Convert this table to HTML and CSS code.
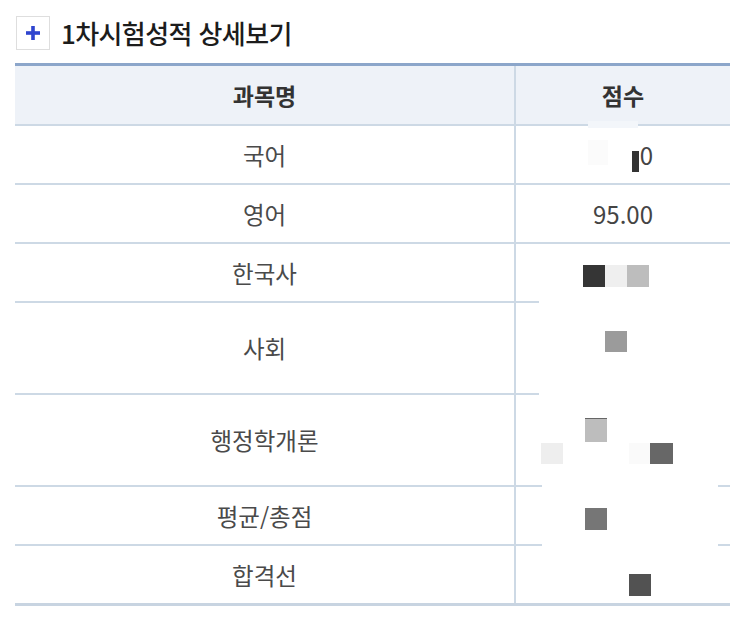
FILE: index.html
```html
<!DOCTYPE html>
<html lang="ko">
<head>
<meta charset="utf-8">
<title>1차시험성적 상세보기</title>
<link rel="stylesheet" href="styles.css">
</head>
<body>
<div class="page">
  <div class="title-bar">
    <span class="plus-box">
      <svg width="14" height="14" viewBox="0 0 14 14" aria-hidden="true">
        <rect x="0" y="5.2" width="14" height="3.6" fill="#2f45cf"/>
        <rect x="5.2" y="0" width="3.6" height="14" fill="#2f45cf"/>
      </svg>
    </span>
    <h2 class="title">1차시험성적 상세보기</h2>
  </div>

  <div class="score-table">
    <div class="row head">
      <div class="cell">과목명</div>
      <div class="cell score">점수</div>
    </div>
    <div class="row">
      <div class="cell">국어</div>
      <div class="cell score shifted"><span class="bar"></span><span class="num">0</span></div>
    </div>
    <div class="row">
      <div class="cell">영어</div>
      <div class="cell score"><span class="num">95.00</span></div>
    </div>
    <div class="row">
      <div class="cell">한국사</div>
      <div class="cell score"></div>
    </div>
    <div class="row tall">
      <div class="cell">사회</div>
      <div class="cell score"></div>
    </div>
    <div class="row tall">
      <div class="cell">행정학개론</div>
      <div class="cell score"></div>
    </div>
    <div class="row">
      <div class="cell">평균/총점</div>
      <div class="cell score"></div>
    </div>
    <div class="row last">
      <div class="cell">합격선</div>
      <div class="cell score"></div>
    </div>
  </div>

  <div class="mosaic" aria-hidden="true">
    <span class="m head-patch"></span>
    <span class="m faint-a"></span>
    <span class="m cover-a"></span>
    <span class="m cover-b"></span>
    <span class="m k1"></span>
    <span class="m k2"></span>
    <span class="m k3"></span>
    <span class="m s1"></span>
    <span class="m h1"></span>
    <span class="m h2"></span>
    <span class="m h3"></span>
    <span class="m h4"></span>
    <span class="m a1"></span>
    <span class="m p1"></span>
  </div>
</div>
</body>
</html>
```

FILE: styles.css
```css
html, body {
  margin: 0;
  padding: 0;
  background: #ffffff;
}

body {
  font-family: "Noto Sans CJK KR", "Noto Sans", sans-serif;
  color: #444444;
}

.page {
  position: relative;
  width: 743px;
  height: 627px;
  box-sizing: border-box;
  padding: 16px 13px 0 15px;
  overflow: hidden;
}

.title-bar {
  display: flex;
  align-items: center;
  height: 34px;
  margin-left: 1px;
}

.plus-box {
  width: 34px;
  height: 34px;
  box-sizing: border-box;
  border: 1px solid #dedede;
  display: flex;
  align-items: center;
  justify-content: center;
  flex: none;
}

.title {
  margin: 0 0 0 11px;
  font-size: 26px;
  font-weight: 500;
  line-height: 34px;
  color: #1c1c1c;
  letter-spacing: -0.6px;
}

.score-table {
  margin-top: 13px;
  width: 715px;
  border-top: 3px solid #8ca6ca;
}

.row {
  display: grid;
  grid-template-columns: 499px 216px;
  height: 59px;
  box-sizing: border-box;
  border-bottom: 2px solid #cdd9e5;
}

.row.head {
  height: 60px;
  background: #eef2f8;
}

.row.tall {
  height: 92px;
}

.row.last {
  height: 60px;
  border-bottom: 3px solid #c8d4e1;
}

.cell {
  display: flex;
  align-items: center;
  justify-content: center;
  font-size: 23.5px;
  font-weight: 400;
  color: #4a4a4a;
}

.head .cell {
  font-weight: 700;
  font-size: 23px;
  color: #333333;
}

.cell.score {
  border-left: 2px solid #cdd9e5;
}

.cell.shifted {
  padding-left: 39px;
}

.num {
  font-size: 24px;
  color: #444444;
}

.bar {
  display: inline-block;
  width: 7px;
  height: 21px;
  margin-top: 14px;
  margin-right: 1px;
  background: #333333;
}

/* censor mosaic lying over the score column */
.mosaic {
  position: absolute;
  left: 0;
  top: 0;
  width: 743px;
  height: 627px;
  pointer-events: none;
}

.m {
  position: absolute;
  display: block;
}

.head-patch { left: 588px; top: 121px; width: 50px; height: 7px; background: #f3f6fa; }
.faint-a { left: 588px; top: 140px; width: 20px; height: 25px; background: #fbfbfb; }
.cover-a { left: 539px; top: 296px; width: 204px; height: 102px; background: #ffffff; }
.cover-b { left: 542px; top: 398px; width: 176px; height: 202px; background: #ffffff; }

.k1 { left: 583px; top: 265px; width: 22px; height: 22px; background: #353535; }
.k2 { left: 605px; top: 265px; width: 22px; height: 22px; background: #efefef; }
.k3 { left: 627px; top: 265px; width: 22px; height: 22px; background: #bdbdbd; }

.s1 { left: 605px; top: 331px; width: 22px; height: 21px; background: #9b9b9b; }

.h1 { left: 585px; top: 418px; width: 22px; height: 24px; background: #bdbdbd; border-top: 1px solid #666666; box-sizing: border-box; }
.h2 { left: 541px; top: 443px; width: 22px; height: 21px; background: #eeeeee; }
.h3 { left: 629px; top: 443px; width: 21px; height: 21px; background: #fafafa; }
.h4 { left: 650px; top: 443px; width: 23px; height: 21px; background: #676767; }

.a1 { left: 585px; top: 508px; width: 22px; height: 22px; background: #767676; }
.p1 { left: 629px; top: 574px; width: 22px; height: 22px; background: #525252; }
```
